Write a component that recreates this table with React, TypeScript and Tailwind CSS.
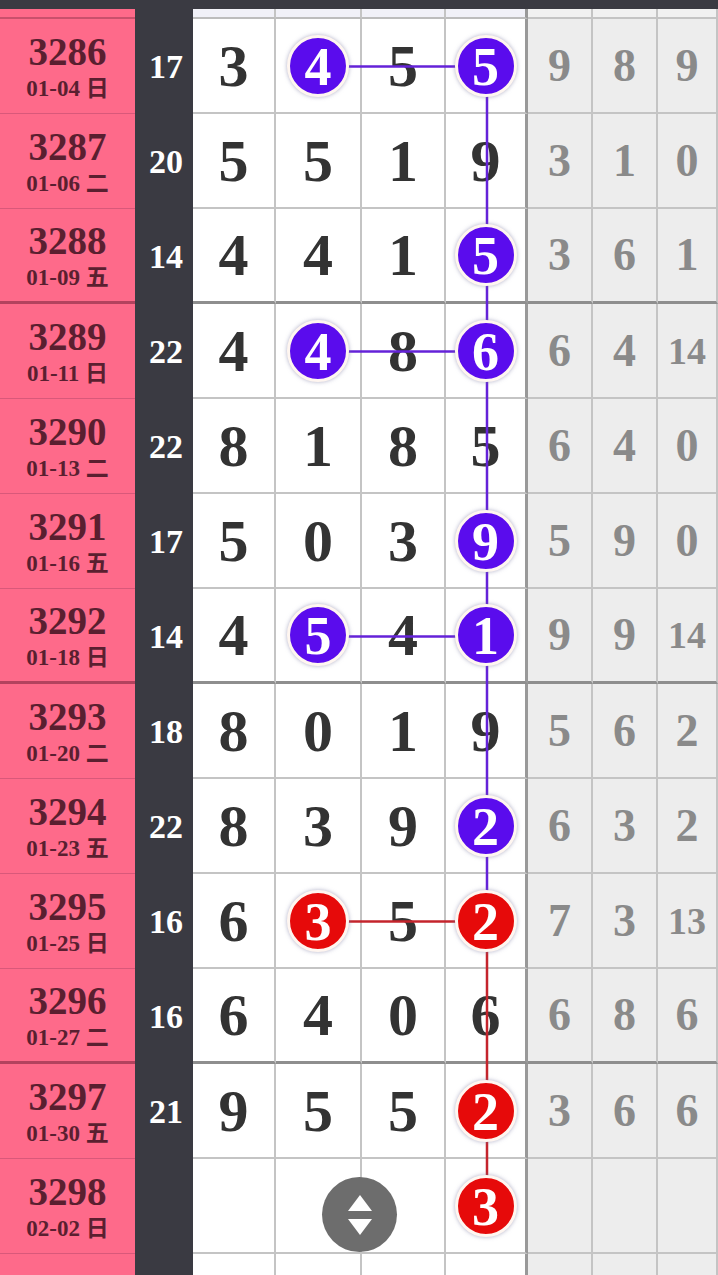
import React from "react";

type Row = {
  no: string;
  date: string;
  sum: string;
  digits: (number | null)[];
  extra: (number | null)[];
};

const ROWS: Row[] = [
  { no: "3286", date: "01-04 日", sum: "17", digits: [3, 4, 5, 5], extra: [9, 8, 9] },
  { no: "3287", date: "01-06 二", sum: "20", digits: [5, 5, 1, 9], extra: [3, 1, 0] },
  { no: "3288", date: "01-09 五", sum: "14", digits: [4, 4, 1, 5], extra: [3, 6, 1] },
  { no: "3289", date: "01-11 日", sum: "22", digits: [4, 4, 8, 6], extra: [6, 4, 14] },
  { no: "3290", date: "01-13 二", sum: "22", digits: [8, 1, 8, 5], extra: [6, 4, 0] },
  { no: "3291", date: "01-16 五", sum: "17", digits: [5, 0, 3, 9], extra: [5, 9, 0] },
  { no: "3292", date: "01-18 日", sum: "14", digits: [4, 5, 4, 1], extra: [9, 9, 14] },
  { no: "3293", date: "01-20 二", sum: "18", digits: [8, 0, 1, 9], extra: [5, 6, 2] },
  { no: "3294", date: "01-23 五", sum: "22", digits: [8, 3, 9, 2], extra: [6, 3, 2] },
  { no: "3295", date: "01-25 日", sum: "16", digits: [6, 3, 5, 2], extra: [7, 3, 13] },
  { no: "3296", date: "01-27 二", sum: "16", digits: [6, 4, 0, 6], extra: [6, 8, 6] },
  { no: "3297", date: "01-30 五", sum: "21", digits: [9, 5, 5, 2], extra: [3, 6, 6] },
  { no: "3298", date: "02-02 日", sum: "", digits: [null, null, null, 3], extra: [null, null, null] },
  { no: "", date: "", sum: "", digits: [null, null, null, null], extra: [null, null, null] },
];

// circled cells: "row-col" -> colour
const MARKS: Record<string, "p" | "r"> = {
  "0-1": "p", "0-3": "p", "2-3": "p", "3-1": "p", "3-3": "p", "5-3": "p",
  "6-1": "p", "6-3": "p", "8-3": "p", "9-1": "r", "9-3": "r", "11-3": "r", "12-3": "r",
};

const GROUP_END = [2, 6, 10];
const ROW_H = 95;
const COL_W = [83, 86, 84, 82];
const COL_CX = [41.5, 126, 211, 294];
const XW = [65, 65, 60];

const SERIF = "font-['Liberation_Serif','DejaVu_Serif','Noto_Sans_CJK_SC',serif]";

function Ball({ n, kind }: { n: number; kind: "p" | "r" }) {
  return (
    <div
      className={`relative z-10 flex h-[62px] w-[62px] items-center justify-center rounded-full border-[3px] border-[#fff6f0] shadow-[0_0_4px_rgba(120,120,160,0.6)] ${
        kind === "p" ? "bg-[#5a0ced]" : "bg-[#e60a0a]"
      }`}
    >
      <span className="pt-[2px] text-[54px] font-bold leading-none text-white">{n}</span>
    </div>
  );
}

function TrendLines() {
  const cy = (r: number) => r * ROW_H + ROW_H / 2;
  const purple = "#6422d8";
  const red = "#c4242c";
  return (
    <svg
      className="absolute left-[193px] top-[19px] z-[5]"
      width={525}
      height={ROW_H * 14}
      viewBox={`0 0 525 ${ROW_H * 14}`}
    >
      <line x1={COL_CX[3]} y1={cy(0)} x2={COL_CX[3]} y2={cy(9)} stroke={purple} strokeWidth={2.5} />
      <line x1={COL_CX[3]} y1={cy(9)} x2={COL_CX[3]} y2={cy(12)} stroke={red} strokeWidth={2.5} />
      {[0, 3, 6].map((r) => (
        <line key={r} x1={COL_CX[1]} y1={cy(r)} x2={COL_CX[3]} y2={cy(r)} stroke={purple} strokeWidth={2.5} />
      ))}
      <line x1={COL_CX[1]} y1={cy(9)} x2={COL_CX[3]} y2={cy(9)} stroke={red} strokeWidth={2.5} />
    </svg>
  );
}

export default function App() {
  return (
    <div className={`relative h-[1275px] w-[718px] overflow-hidden bg-[#3a3a42] ${SERIF}`}>
      <div className="h-[9px]" />

      {/* tail of the previous row */}
      <div className="flex h-[10px]">
        <div className="w-[135px] shrink-0 border-b-2 border-[#c9506c] bg-[#fe6a8a]" />
        <div className="w-[58px] shrink-0" />
        {COL_W.map((w, i) => (
          <div
            key={i}
            style={{ width: w }}
            className={`shrink-0 border-b-2 border-[#bdbdbd] bg-[#f1f1f8] ${i === 3 ? "border-r-[3px] border-r-[#999]" : "border-r-2 border-r-[#c4c4c4]"}`}
          />
        ))}
        {XW.map((w, i) => (
          <div key={i} style={{ width: w }} className="shrink-0 border-b-2 border-r-2 border-[#c4c4c4] bg-[#f1f1f1]" />
        ))}
      </div>

      {ROWS.map((row, r) => {
        const thick = GROUP_END.includes(r);
        return (
          <div key={r} className="flex h-[95px]">
            <div
              className={`flex w-[135px] shrink-0 flex-col items-center justify-center bg-[#fe6a8a] text-[#5a1f30] ${
                thick ? "border-b-[3px] border-[#b3425e]" : "border-b border-[#d9587a]"
              }`}
            >
              <span className="text-[39px] font-bold leading-[40px]">{row.no}</span>
              <span className="mt-[5px] text-[23px] font-bold leading-[24px]">{row.date}</span>
            </div>
            <div className="flex w-[58px] shrink-0 items-center justify-center pl-[4px]">
              <span className="text-[34px] font-bold text-white">{row.sum}</span>
            </div>
            {row.digits.map((d, c) => {
              const mark = MARKS[`${r}-${c}`];
              return (
                <div
                  key={c}
                  style={{ width: COL_W[c] }}
                  className={`flex shrink-0 items-center justify-center bg-white ${
                    thick ? "border-b-[3px] border-b-[#8e8e8e]" : "border-b-2 border-b-[#c4c4c4]"
                  } ${c === 3 ? "border-r-[3px] border-r-[#999]" : "border-r-2 border-r-[#c4c4c4]"}`}
                >
                  {d !== null && mark ? (
                    <Ball n={d} kind={mark} />
                  ) : (
                    <span className="text-[60px] font-bold leading-none text-[#333]">{d}</span>
                  )}
                </div>
              );
            })}
            {row.extra.map((v, c) => (
              <div
                key={c}
                style={{ width: XW[c] }}
                className={`flex shrink-0 items-center justify-center border-r-2 border-r-[#c4c4c4] bg-[#ededed] ${
                  thick ? "border-b-[3px] border-b-[#8e8e8e]" : "border-b-2 border-b-[#c4c4c4]"
                }`}
              >
                <span
                  className={`font-bold leading-none text-[#8a8a8a] ${v !== null && v > 9 ? "text-[38px]" : "text-[46px]"}`}
                >
                  {v}
                </span>
              </div>
            ))}
          </div>
        );
      })}

      <TrendLines />

      <button
        type="button"
        aria-label="scroll"
        className="absolute left-[322px] top-[1177px] z-20 flex h-[75px] w-[75px] items-center justify-center rounded-full bg-[#6d6d6d]"
      >
        <svg width="28" height="44" viewBox="0 0 28 44">
          <path d="M14 2 L26 18 L2 18 Z" fill="#fff" strokeLinejoin="round" />
          <path d="M2 26 L26 26 L14 42 Z" fill="#fff" />
        </svg>
      </button>
    </div>
  );
}
